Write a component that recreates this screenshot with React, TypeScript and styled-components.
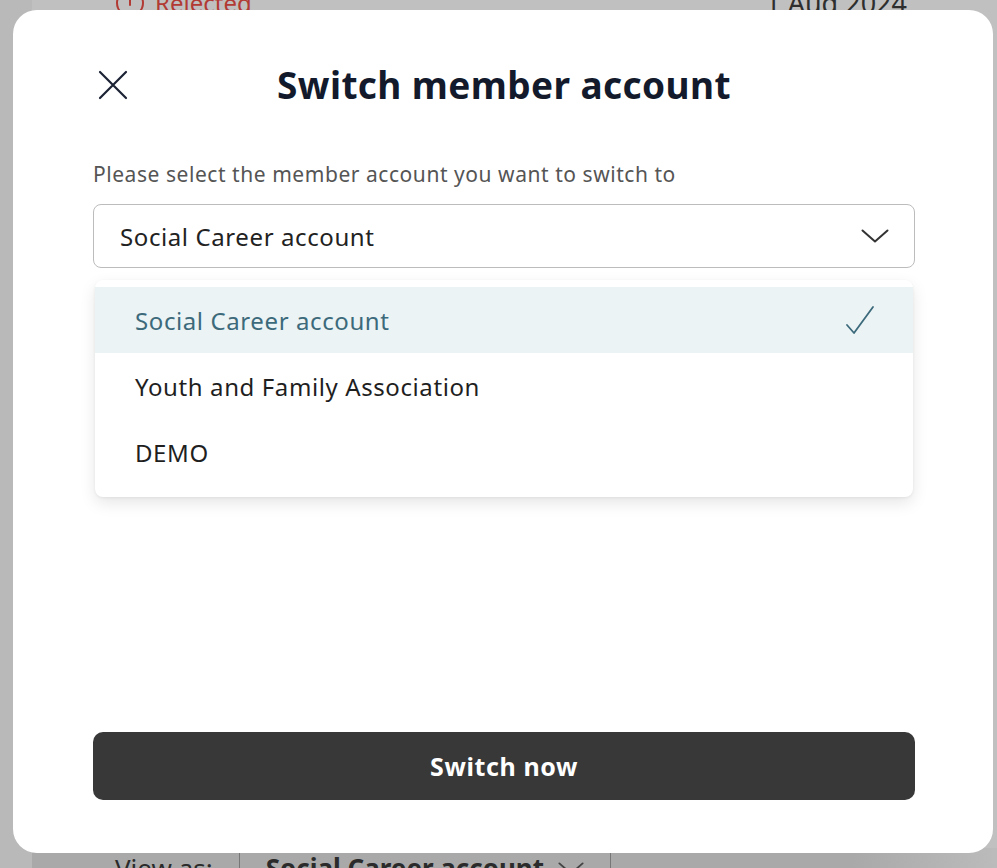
import styled, { createGlobalStyle } from 'styled-components'

const GlobalStyle = createGlobalStyle`
    html, body {
        margin: 0;
        padding: 0;
        overflow: hidden;
    }
    body {
        font-family: "Noto Sans", Lato, sans-serif;
    }
`

const Page = styled.div`
    position: relative;
    width: 997px;
    height: 868px;
    display: flex;
    flex-flow: row;
    background: #c0c0c0;
    overflow: hidden;
`

const Sidebar = styled.div`
    width: 32px;
    background: #b9b9b9;
`

const Main = styled.div`
    flex: 1;
    display: flex;
    flex-flow: column;
    justify-content: space-between;
`

const TopRow = styled.div`
    display: flex;
    justify-content: space-between;
    align-items: center;
    margin-top: -16px;
    padding: 0 90px 0 83px;
    font-size: 24px;
`

const Status = styled.div`
    display: flex;
    align-items: center;
    gap: 10px;
    color: #b23a34;
`

const DateText = styled.div`
    color: #2e2e2e;
    font-size: 27px;
`

const BottomBar = styled.div`
    display: flex;
    align-items: center;
    height: 40px;
    margin-bottom: -20px;
    padding-left: 83px;
    background: linear-gradient(90deg, #a9a9a9 0%, #a9a9a9 85%, #bbbbbb 100%);
    font-size: 26px;
    color: #2b2b2b;
`

const Divider = styled.span`
    width: 1px;
    height: 40px;
    background: #777;
    margin: 0 26px;
`

const ViewAsValue = styled.span`
    display: flex;
    align-items: center;
    gap: 14px;
    font-weight: 700;
`

const Modal = styled.div`
    position: absolute;
    left: 13px;
    top: 10px;
    width: 980px;
    height: 843px;
    box-sizing: border-box;
    display: flex;
    flex-flow: column;
    padding: 0 78px 53px 80px;
    background: #ffffff;
    border-radius: 24px;
`

const Header = styled.div`
    display: grid;
    grid-template-columns: 40px 1fr 40px;
    align-items: center;
    height: 50px;
    margin-top: 49px;
`

const CloseButton = styled.button`
    display: flex;
    align-items: center;
    justify-content: center;
    width: 40px;
    height: 40px;
    padding: 0;
    border: none;
    background: none;
    cursor: pointer;
`

const Title = styled.h1`
    margin: 0;
    text-align: center;
    font-size: 37px;
    font-weight: 700;
    letter-spacing: 0.4px;
    color: #131a2b;
`

const Label = styled.div`
    margin-top: 52px;
    font-size: 21px;
    line-height: 26px;
    letter-spacing: 0.55px;
    color: #555;
`

const SelectBox = styled.div`
    display: flex;
    align-items: center;
    justify-content: space-between;
    height: 64px;
    margin-top: 17px;
    box-sizing: border-box;
    padding: 0 25px 0 26px;
    border: 1px solid #bcbcbc;
    border-radius: 8px;
    font-size: 24px;
    letter-spacing: 0.6px;
    color: #222;
`

const Menu = styled.div`
    margin: 12px 2px 0 2px;
    padding: 7px 0 12px;
    background: #fff;
    border-radius: 8px;
    box-shadow: 0px 6px 16px rgba(0, 0, 0, 0.1), 0px 1px 3px rgba(0, 0, 0, 0.06);
`

const Option = styled.div<{ selected?: boolean }>`
    display: flex;
    align-items: center;
    justify-content: space-between;
    height: 66px;
    padding: 0 38px 0 40px;
    font-size: 24px;
    letter-spacing: 0.6px;
    background: ${p => p.selected ? '#ebf3f5' : 'transparent'};
    color: ${p => p.selected ? '#3c6a7b' : '#1f1f1f'};
`

const SubmitButton = styled.button`
    margin-top: auto;
    height: 68px;
    border: none;
    border-radius: 10px;
    background: #383838;
    color: #fff;
    font-family: "Noto Sans", Lato, sans-serif;
    font-size: 25px;
    font-weight: 700;
    letter-spacing: 0.6px;
    cursor: pointer;
`

const Chevron = ({ size = 28, color = '#333' }: { size?: number; color?: string }) => (
    <svg width={size} height={size / 2} viewBox="0 0 28 14" fill="none">
        <path d="M1.5 1.5 L14 12.5 L26.5 1.5" stroke={color} strokeWidth="2" strokeLinecap="round" strokeLinejoin="round" />
    </svg>
)

const accounts = ['Social Career account', 'Youth and Family Association', 'DEMO']

const App = () => {
    return (
        <>
            <GlobalStyle />
            <Page>
                <Sidebar />
                <Main>
                    <TopRow>
                        <Status>
                            <svg width="30" height="30" viewBox="0 0 30 30" fill="none">
                                <circle cx="15" cy="15" r="13" stroke="#b23a34" strokeWidth="2" />
                                <path d="M15 8 V17" stroke="#b23a34" strokeWidth="2" strokeLinecap="round" />
                            </svg>
                            Rejected
                        </Status>
                        <DateText>1 Aug 2024</DateText>
                    </TopRow>
                    <BottomBar>
                        View as:
                        <Divider />
                        <ViewAsValue>Social Career account <Chevron size={26} color="#444" /></ViewAsValue>
                        <Divider />
                    </BottomBar>
                </Main>
                <Modal>
                    <Header>
                        <CloseButton aria-label="Close">
                            <svg width="30" height="30" viewBox="0 0 30 30" fill="none">
                                <path d="M2 2 L28 28 M28 2 L2 28" stroke="#1b2233" strokeWidth="2.2" strokeLinecap="round" />
                            </svg>
                        </CloseButton>
                        <Title>Switch member account</Title>
                        <span />
                    </Header>
                    <Label>Please select the member account you want to switch to</Label>
                    <SelectBox>
                        Social Career account
                        <Chevron />
                    </SelectBox>
                    <Menu>
                        {accounts.map((name, i) => (
                            <Option key={name} selected={i === 0}>
                                {name}
                                {i === 0 && (
                                    <svg width="30" height="30" viewBox="0 0 30 30" fill="none">
                                        <path d="M2 20 L9 28 L28 2" stroke="#3c6a7b" strokeWidth="1.8" strokeLinecap="round" strokeLinejoin="round" />
                                    </svg>
                                )}
                            </Option>
                        ))}
                    </Menu>
                    <SubmitButton>Switch now</SubmitButton>
                </Modal>
            </Page>
        </>
    )
}

export default App
